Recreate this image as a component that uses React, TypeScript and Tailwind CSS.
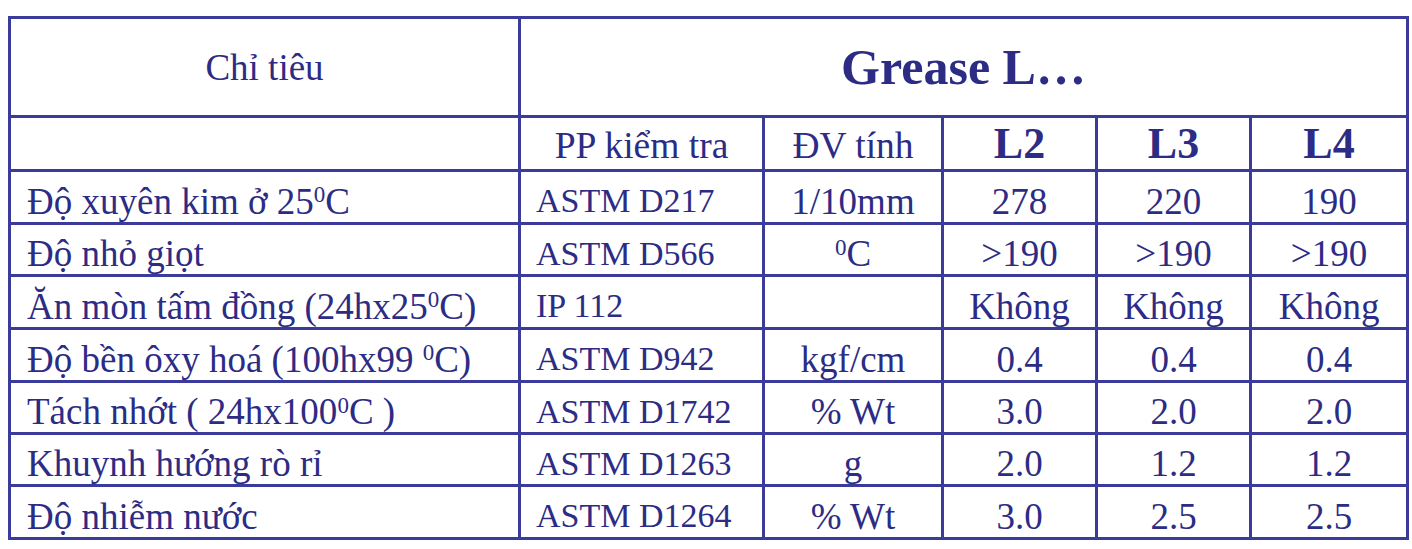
const rows: {
  name: React.ReactNode;
  method: string;
  unit: React.ReactNode;
  values: [string, string, string];
}[] = [
  {
    name: (
      <>
        Độ xuyên kim ở 25<sup className="text-[23px]">0</sup>C
      </>
    ),
    method: "ASTM D217",
    unit: "1/10mm",
    values: ["278", "220", "190"],
  },
  {
    name: "Độ nhỏ giọt",
    method: "ASTM D566",
    unit: (
      <>
        <sup className="text-[23px]">0</sup>C
      </>
    ),
    values: [">190", ">190", ">190"],
  },
  {
    name: (
      <>
        Ăn mòn tấm đồng (24hx25<sup className="text-[23px]">0</sup>C)
      </>
    ),
    method: "IP 112",
    unit: "",
    values: ["Không", "Không", "Không"],
  },
  {
    name: (
      <>
        Độ bền ôxy hoá (100hx99 <sup className="text-[23px]">0</sup>C)
      </>
    ),
    method: "ASTM D942",
    unit: "kgf/cm",
    values: ["0.4", "0.4", "0.4"],
  },
  {
    name: (
      <>
        Tách nhớt ( 24hx100<sup className="text-[23px]">0</sup>C )
      </>
    ),
    method: "ASTM D1742",
    unit: "% Wt",
    values: ["3.0", "2.0", "2.0"],
  },
  {
    name: "Khuynh hướng rò rỉ",
    method: "ASTM D1263",
    unit: "g",
    values: ["2.0", "1.2", "1.2"],
  },
  {
    name: "Độ nhiễm nước",
    method: "ASTM D1264",
    unit: "% Wt",
    values: ["3.0", "2.5", "2.5"],
  },
];

const rowHeights = ["h-[53px]", "h-[52px]", "h-[53px]", "h-[53px]", "h-[52px]", "h-[52px]", "h-[53px]"];

export default function App() {
  const cell = "border-[3px] border-[#3b3b9c] p-0 align-middle leading-none";
  const data = `${cell} pt-[8px]`;

  return (
    <div className="h-[549px] w-[1412px] bg-white pl-2 pt-4 font-['Liberation_Serif',_'Times_New_Roman',_serif] text-[#2c2c85]">
      <table className="w-[1398px] table-fixed border-collapse">
        <colgroup>
          <col className="w-[510px]" />
          <col className="w-[244px]" />
          <col className="w-[179px]" />
          <col className="w-[154px]" />
          <col className="w-[154px]" />
          <col className="w-[157px]" />
        </colgroup>
        <tbody>
          <tr className="h-[99px]">
            <td className={`${cell} text-center text-[37px]`}>Chỉ tiêu</td>
            <td colSpan={5} className={`${cell} text-center text-[50px] font-bold`}>
              Grease L…
            </td>
          </tr>
          <tr className="h-[54px]">
            <td className={cell}></td>
            <td className={`${cell} pt-[4px] text-center text-[37.5px]`}>PP kiểm tra</td>
            <td className={`${cell} pt-[4px] text-center text-[37.5px]`}>ĐV tính</td>
            <td className={`${cell} text-center text-[44px] font-bold`}>L2</td>
            <td className={`${cell} text-center text-[44px] font-bold`}>L3</td>
            <td className={`${cell} text-center text-[44px] font-bold`}>L4</td>
          </tr>
          {rows.map((r, i) => (
            <tr key={i} className={rowHeights[i]}>
              <td className={`${data} pl-[16px] text-left text-[37px] whitespace-nowrap`}>{r.name}</td>
              <td className={`${data} pl-[15px] text-left text-[34px]`}>{r.method}</td>
              <td className={`${data} text-center text-[37px]`}>{r.unit}</td>
              {r.values.map((v, j) => (
                <td key={j} className={`${data} text-center text-[37px]`}>
                  {v}
                </td>
              ))}
            </tr>
          ))}
        </tbody>
      </table>
    </div>
  );
}
